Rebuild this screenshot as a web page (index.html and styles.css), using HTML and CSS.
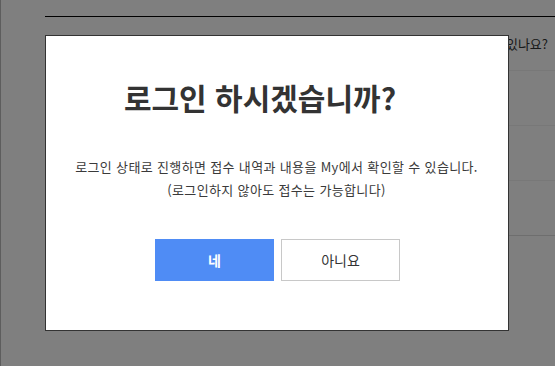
FILE: index.html
```html
<!DOCTYPE html>
<html lang="ko">
<head>
<meta charset="utf-8">
<link rel="stylesheet" href="styles.css">
</head>
<body>
<div class="page">
  <div class="content">
    <div class="row row-q"><span class="q">접수 내역을 확인하시겠습니까? 궁금한 점이 있나요?</span></div>
    <div class="row"></div>
    <div class="row"></div>
    <div class="row row-last"></div>
  </div>
</div>
<div class="overlay">
  <div class="modal">
    <h1 class="title">로그인 하시겠습니까?</h1>
    <p class="desc">로그인 상태로 진행하면 접수 내역과 내용을 My에서 확인할 수 있습니다.<br>(로그인하지 않아도 접수는 가능합니다)</p>
    <div class="actions">
      <button class="btn btn-yes">네</button>
      <button class="btn btn-no">아니요</button>
    </div>
  </div>
</div>
</body>
</html>
```
FILE: styles.css
```css
* { box-sizing: border-box; }
html, body { margin: 0; padding: 0; }
body {
  width: 555px;
  height: 366px;
  overflow: hidden;
  background: #fff;
  font-family: "Noto Sans CJK KR", "Noto Sans", sans-serif;
  color: #333;
  border-left: 1px solid #bbb;
}
.page {
  padding: 16px 0 0 44px;
}
.content {
  border-top: 1px solid #000;
}
.row {
  height: 55px;
  border-bottom: 1px solid #f0f0f0;
  display: flex;
  justify-content: flex-end;
  align-items: flex-start;
}
.row-q { height: 54px; padding-top: 17px; }
.row-last { border-bottom: 1px solid #ddd; }
.q {
  font-size: 13px;
  line-height: 20px;
  color: #333;
  white-space: nowrap;
  margin-right: 7px;
}
.overlay {
  position: fixed;
  inset: 0;
  background: rgba(0, 0, 0, 0.5);
  display: flex;
  align-items: center;
  justify-content: center;
  padding: 0 2px 1px 0;
}
.modal {
  width: 464px;
  height: 296px;
  background: #fff;
  border: 1px solid #333;
  display: flex;
  flex-direction: column;
  align-items: center;
  padding-top: 40px;
}
.title {
  margin: 0;
  padding-right: 33px;
  font-size: 30px;
  font-weight: 700;
  line-height: 42px;
  color: #333;
  letter-spacing: 0;
}
.desc {
  margin: 37px 0 0;
  font-size: 13px;
  line-height: 23px;
  color: #3a3a3a;
  text-align: center;
  letter-spacing: 0.35px;
}
.actions {
  display: flex;
  gap: 7px;
  margin-top: 38px;
  padding-left: 2px;
}
.btn {
  width: 119px;
  height: 42px;
  font-family: inherit;
  font-size: 14px;
  border: 1px solid #c8c8c8;
  background: #fff;
  color: #333;
  padding: 0;
}
.btn-yes {
  background: #4f8cf5;
  border-color: #4f8cf5;
  color: #fff;
  font-weight: 700;
}
```
